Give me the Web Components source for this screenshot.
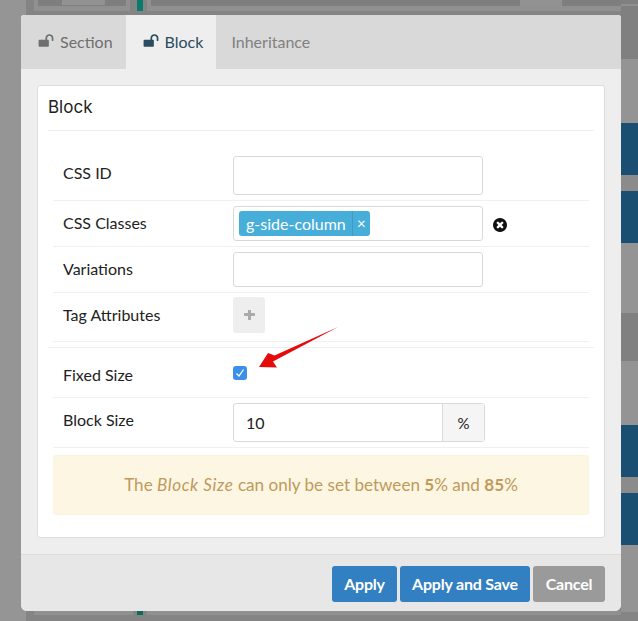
<!DOCTYPE html>
<html lang="en">
  <head>
    <meta charset="UTF-8" />
    <title>Block settings</title>
    <style>
      html, body { margin: 0; height: 621px; overflow: hidden; }
      body { font-family: "Lato", "Liberation Sans", sans-serif; }
    </style>
  </head>
  <body>
    <settings-page>
      <settings-modal>
        <modal-tab slot="tabs" icon>Section</modal-tab>
        <modal-tab slot="tabs" icon active>Block</modal-tab>
        <modal-tab slot="tabs">Inheritance</modal-tab>

        <form-row label="CSS ID" style="--row-top: 25px; --label-shift: 7px"><text-field></text-field></form-row>
        <form-row label="CSS Classes">
          <text-field style="--field-h: 35px; --field-pad: 4px 5px"><class-tag>g-side-column</class-tag></text-field>
          <clear-icon></clear-icon>
        </form-row>
        <form-row label="Variations"><text-field style="--field-h: 35px"></text-field></form-row>
        <form-row label="Tag Attributes" style="--row-top: 4px; --row-bottom: 8px"><add-button></add-button></form-row>
        <form-row divider label="Fixed Size" style="--row-top: 14px; --row-bottom: 13px; --label-shift: 0px; --label-drop: 3px"><check-box></check-box></form-row>
        <form-row label="Block Size" style="--label-shift: 7px"><text-field addon="%">10</text-field></form-row>

        <info-alert>The <em>Block Size</em> can only be set between <b>5</b>% and <b>85</b>%</info-alert>

        <modal-button slot="actions" color="#327fc1">Apply</modal-button>
        <modal-button slot="actions" color="#327fc1" style="--btn-w: 130px">Apply and Save</modal-button>
        <modal-button slot="actions" color="#9a9a9a" style="--btn-w: 72px">Cancel</modal-button>
      </settings-modal>
    </settings-page>

    <script>
      // Small helper so every element gets an open shadow root with its markup
      class ShadowElement extends HTMLElement {
        constructor() {
          super();
          this.attachShadow({ mode: "open" });
        }
      }

      const UNLOCK =
        "M1728 576v256q0 26-19 45t-45 19h-64q-26 0-45-19t-19-45v-256q0-106-75-181t-181-75-181 75-75 181v192h96q40 0 68 28t28 68v576q0 40-28 68t-68 28h-960q-40 0-68-28t-28-68v-576q0-40 28-68t68-28h672v-192q0-185 131.500-316.500t316.500-131.500 316.500 131.500 131.500 316.500z";

      // Dimmed page behind the dialog, painted as hard-stop backgrounds
      class SettingsPage extends ShadowElement {
        connectedCallback() {
          this.shadowRoot.innerHTML = `
            <style>
              :host {
                display: block;
                width: 638px;
                height: 621px;
                padding: 15px 0 0 21px;
                box-sizing: border-box;
                background:
                  linear-gradient(#808080 0 4px, #909090 4px 6px, #808080 6px 59px, #949494 59px 123px, #1b4f72 123px 175px, #8b8b8b 175px 191px, #1b4f72 191px 243px, #949494 243px 313px, #808080 313px 361px, #949494 361px 425px, #1b4f72 425px 477px, #8b8b8b 477px 493px, #1b4f72 493px 545px, #949494 545px 612px, #858585 612px) 621px 0 / 17px 621px no-repeat,
                  linear-gradient(#0b7c6c, #0b7c6c) 137px 0 / 6px 11px no-repeat,
                  linear-gradient(#0b6b5f, #0b6b5f) 137px 611px / 6px 4px no-repeat,
                  linear-gradient(#929292, #929292) 62px 0 / 43px 5px no-repeat,
                  linear-gradient(#929292, #929292) 520px 0 / 42px 6px no-repeat,
                  linear-gradient(#7e7e7e, #7e7e7e) 38px 0 / 88px 6px no-repeat,
                  linear-gradient(#7e7e7e, #7e7e7e) 151px 0 / 470px 6px no-repeat,
                  linear-gradient(#909090, #909090) 34px 0 / 96px 11px no-repeat,
                  linear-gradient(#909090, #909090) 147px 0 / 491px 11px no-repeat,
                  linear-gradient(#909090, #909090) 34px 611px / 99px 4px no-repeat,
                  linear-gradient(#909090, #909090) 147px 611px / 491px 4px no-repeat,
                  linear-gradient(#959595, #959595) 0 0 / 26px 621px no-repeat,
                  #848484;
              }
            </style>
            <slot></slot>`;
        }
      }
      customElements.define("settings-page", SettingsPage);

      // The dialog: tab strip, white panel, footer with the buttons
      class SettingsModal extends ShadowElement {
        connectedCallback() {
          this.shadowRoot.innerHTML = `
            <style>
              :host {
                display: flex;
                flex-direction: column;
                position: relative;
                width: 600px;
                height: 596px;
                background: #eee;
                border-radius: 3px 3px 6px 6px;
                overflow: hidden;
                color: #222;
              }
              .tabs { display: flex; height: 54px; background: #d9d9d9; flex: none; }
              .body { flex: 1; padding: 16px; min-height: 0; }
              .panel {
                box-sizing: border-box;
                height: 453px;
                background: #fff;
                border: 1px solid #ddd;
                border-radius: 3px;
                padding: 0 10px;
              }
              h2 {
                margin: 0;
                height: 45px;
                line-height: 43px;
                font-size: 17px;
                font-weight: 400;
                font-family: "Inter", sans-serif;
                color: #222;
                border-bottom: 1px solid #eee;
                box-sizing: border-box;
              }
              .rows { margin: 0 5px; }
              .actions {
                display: flex;
                justify-content: flex-end;
                gap: 3px;
                height: 57px;
                padding: 11px 16px 0 0;
                box-sizing: border-box;
                background: #e7e7e7;
                border-top: 1px solid #ddd;
                flex: none;
              }
              svg { position: absolute; left: 0; top: 0; pointer-events: none; }
            </style>
            <div class="tabs"><slot name="tabs"></slot></div>
            <div class="body">
              <div class="panel">
                <h2>Block</h2>
                <div class="rows"><slot></slot></div>
              </div>
            </div>
            <div class="actions"><slot name="actions"></slot></div>
            <!-- red annotation arrow over the form -->
            <svg width="600" height="596" viewBox="21 15 600 596">
              <path d="M338 327 L274.500 355.500 L268 353 L259 367 L277 367.500 L273 361.500 Z" fill="#e60b0b" />
            </svg>`;
        }
      }
      customElements.define("settings-modal", SettingsModal);

      class ModalTab extends ShadowElement {
        connectedCallback() {
          const active = this.hasAttribute("active");
          const color = active ? "#2b4c5f" : this.hasAttribute("icon") ? "#6f6f6f" : "#808080";
          const icon = this.hasAttribute("icon")
            ? `<svg width="16" height="16" viewBox="0 0 1792 1792"><path fill="currentColor" d="${UNLOCK}" /></svg>`
            : "";
          this.shadowRoot.innerHTML = `
            <style>
              :host {
                display: flex;
                align-items: center;
                gap: 6px;
                padding: 0 13px 2px ${this.hasAttribute("icon") ? "17px" : "15px"};
                font-size: 16px;
                color: ${color};
                background: ${active ? "#eee" : "transparent"};
              }
              svg { margin-top: -1px; }
            </style>
            ${icon}<slot></slot>`;
        }
      }
      customElements.define("modal-tab", ModalTab);

      // One line of the form: label column on the left, controls on the right
      class FormRow extends ShadowElement {
        connectedCallback() {
          const divider = this.hasAttribute("divider");
          this.shadowRoot.innerHTML = `
            <style>
              :host {
                display: block;
                font-size: 16px;
                color: #222;
                border-bottom: 1px solid #f0f0f0;
              }
              .line { ${divider ? "border-top: 1px solid #eee; margin: 0 -5px; padding: 0 5px;" : ""} }
              .row {
                display: flex;
                align-items: center;
                padding: var(--row-top, 5px) 0 var(--row-bottom, 5px) 10px;
              }
              label {
                width: 170px;
                flex: none;
                padding-bottom: var(--label-shift, 2px);
                margin-top: var(--label-drop, 0);
              }
              .controls { display: flex; align-items: center; flex: 1; }
            </style>
            <div class="line"><div class="row">
              <label>${this.getAttribute("label")}</label>
              <div class="controls"><slot></slot></div>
            </div></div>`;
          if (divider) this.style.marginTop = "5px";
        }
      }
      customElements.define("form-row", FormRow);

      class TextField extends ShadowElement {
        connectedCallback() {
          const addon = this.getAttribute("addon");
          this.shadowRoot.innerHTML = `
            <style>
              :host {
                display: flex;
                box-sizing: border-box;
                width: ${addon ? "252px" : "250px"};
                height: var(--field-h, 39px);
                border: 1px solid #d9d9d9;
                border-radius: 3px;
                background: #fff;
                font-size: 16px;
                color: #222;
              }
              .value { flex: 1; display: flex; align-items: center; padding: var(--field-pad, 0 12px); }
              .addon {
                width: 41px;
                display: flex;
                align-items: center;
                justify-content: center;
                background: #f5f5f5;
                border-left: 1px solid #d9d9d9;
                font-size: 15px;
              }
            </style>
            <div class="value"><slot></slot></div>
            ${addon ? `<div class="addon">${addon}</div>` : ""}`;
        }
      }
      customElements.define("text-field", TextField);

      class ClassTag extends ShadowElement {
        connectedCallback() {
          this.shadowRoot.innerHTML = `
            <style>
              :host {
                display: inline-flex;
                height: 25px;
                align-items: center;
                background: #46aed8;
                color: #fff;
                border-radius: 3px;
                font-size: 16px;
              }
              span { padding: 0 6px 0 7px; }
              .x { padding: 0; width: 17px; text-align: center; align-self: stretch; line-height: 25px; border-left: 1px solid #3c9cc4; font-size: 15px; }
            </style>
            <span><slot></slot></span><span class="x">×</span>`;
        }
      }
      customElements.define("class-tag", ClassTag);

      class ClearIcon extends ShadowElement {
        connectedCallback() {
          this.shadowRoot.innerHTML = `
            <style>
              :host { display: block; margin-left: 10px; height: 14px; margin-top: 3px; }
              svg { display: block; }
            </style>
            <svg width="14" height="14" viewBox="128 128 1536 1536"><path fill="#111" d="M1277 1122q0-26-19-45l-181-181 181-181q19-19 19-45 0-27-19-46l-90-91q-19-19-46-19-26 0-45 19l-181 181-181-181q-19-19-45-19-27 0-46 19l-91 90q-19 19-19 46 0 26 19 45l181 181-181 181q-19 19-19 45 0 27 19 46l90 91q19 19 46 19 26 0 45-19l181-181 181 181q19 19 45 19 27 0 46-19l91-90q19-19 19-46zm387-226q0 209-103 385.500t-279.500 279.500-385.500 103-385.500-103-279.500-279.500-103-385.500 103-385.500 279.500-279.500 385.500-103 385.500 103 279.500 279.500 103 385.500z" /></svg>`;
        }
      }
      customElements.define("clear-icon", ClearIcon);

      class AddButton extends ShadowElement {
        connectedCallback() {
          this.shadowRoot.innerHTML = `
            <style>
              :host {
                display: flex;
                align-items: center;
                justify-content: center;
                width: 32px;
                height: 36px;
                background: #eee;
                border-radius: 3px;
              }
            </style>
            <svg width="11" height="11" viewBox="192 256 1408 1408"><path fill="#aaa" d="M1600 736v192q0 40-28 68t-68 28h-416v416q0 40-28 68t-68 28h-192q-40 0-68-28t-28-68v-416h-416q-40 0-68-28t-28-68v-192q0-40 28-68t68-28h416v-416q0-40 28-68t68-28h192q40 0 68 28t28 68v416h416q40 0 68 28t28 68z" /></svg>`;
        }
      }
      customElements.define("add-button", AddButton);

      class CheckBox extends ShadowElement {
        connectedCallback() {
          this.shadowRoot.innerHTML = `
            <style>
              :host {
                display: flex;
                align-items: center;
                justify-content: center;
                width: 14px;
                height: 14px;
                background: #3b8eea;
                border-radius: 3px;
              }
            </style>
            <svg width="10" height="10" viewBox="0 0 10 10"><path d="M1.500 5.500 L4 8 L8.500 1.500" fill="none" stroke="#fff" stroke-width="1.300" /></svg>`;
        }
      }
      customElements.define("check-box", CheckBox);

      class InfoAlert extends ShadowElement {
        connectedCallback() {
          this.shadowRoot.innerHTML = `
            <style>
              :host {
                display: block;
                box-sizing: border-box;
                height: 60px;
                margin: 7px 0 0;
                line-height: 58px;
                text-align: center;
                font-size: 17.100px;
                color: #bf9a5b;
                background: #fdf6e3;
                border: 1px solid #faf3df;
                border-radius: 3px;
              }
              ::slotted(em) { letter-spacing: 0.600px; }
            </style>
            <slot></slot>`;
        }
      }
      customElements.define("info-alert", InfoAlert);

      class ModalButton extends ShadowElement {
        connectedCallback() {
          this.shadowRoot.innerHTML = `
            <style>
              :host {
                display: flex;
                align-items: center;
                justify-content: center;
                box-sizing: border-box;
                width: var(--btn-w, 65px);
                height: 36px;
                padding-bottom: 2px;
                border-radius: 3px;
                font-size: 16px;
                letter-spacing: -0.200px;
                font-weight: 700;
                color: #fff;
                background: ${this.getAttribute("color")};
              }
            </style>
            <slot></slot>`;
        }
      }
      customElements.define("modal-button", ModalButton);
    </script>
  </body>
</html>
